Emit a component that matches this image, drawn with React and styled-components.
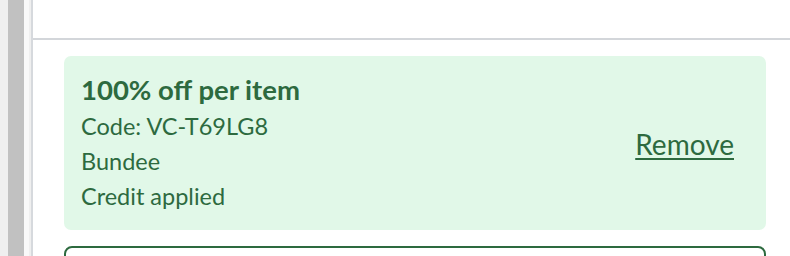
import styled, { createGlobalStyle } from "styled-components";

const GlobalStyle = createGlobalStyle`
  html, body {
    margin: 0;
    padding: 0;
    background: #ffffff;
    font-family: Lato, "Open Sans", sans-serif;
  }
`;

const Page = styled.div`
  display: flex;
  height: 256px;
  overflow: hidden;
`;

const Gutter = styled.div`
  display: flex;
  flex-shrink: 0;
  width: 31px;
  background: #efefef;
  border-right: 2px solid #d6d9dd;

  span {
    width: 16px;
    margin-left: 8px;
    background: #c1c1c1;
  }

  i {
    width: 5px;
    background: #f9f9f9;
  }
`;

const Main = styled.div`
  flex: 1;
  display: flex;
  flex-direction: column;
`;

const TopBar = styled.div`
  height: 38px;
  flex-shrink: 0;
  border-bottom: 2px solid #d3d6da;
`;

const List = styled.div`
  display: flex;
  flex-direction: column;
  gap: 16px;
  padding: 16px 24px 0 31px;
`;

const Voucher = styled.div`
  display: flex;
  align-items: center;
  justify-content: space-between;
  height: 174px;
  box-sizing: border-box;
  padding: 0 32px 0 17px;
  background: #e1f8e8;
  border-radius: 7px;
  color: #2d6a3f;
`;

const Details = styled.div`
  display: flex;
  flex-direction: column;
  align-self: flex-start;
  padding-top: 14px;
`;

const Title = styled.strong`
  font-size: 27.5px;
  font-weight: 700;
  line-height: 39px;
`;

const Line = styled.span`
  font-size: 23.5px;
  line-height: 35px;
`;

const RemoveLink = styled.a`
  margin-top: 4px;
  font-size: 28px;
  line-height: 1.2;
  color: #2d6a3f;
  text-decoration: underline;
  text-underline-offset: 3px;
  cursor: pointer;
`;

const OutlineCard = styled.div`
  height: 60px;
  border: 2px solid #2d6a3f;
  border-radius: 8px;
`;

export default function App() {
  return (
    <>
      <GlobalStyle />
      <Page>
        <Gutter>
          <span />
          <i />
        </Gutter>
        <Main>
          <TopBar />
          <List>
            <Voucher>
              <Details>
                <Title>100% off per item</Title>
                <Line>Code: VC-T69LG8</Line>
                <Line>Bundee</Line>
                <Line>Credit applied</Line>
              </Details>
              <RemoveLink>Remove</RemoveLink>
            </Voucher>
            <OutlineCard />
          </List>
        </Main>
      </Page>
    </>
  );
}
